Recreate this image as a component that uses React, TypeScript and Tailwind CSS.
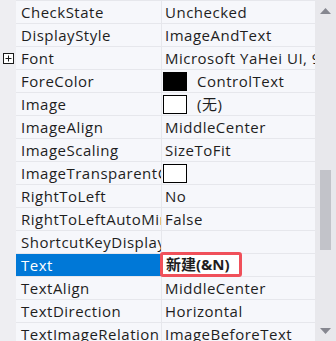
import React from "react";

type Row = {
  name: string;
  value: string;
  swatch?: "black" | "white";
  expand?: boolean;
  selected?: boolean;
};

const rows: Row[] = [
  { name: "CheckState", value: "Unchecked" },
  { name: "DisplayStyle", value: "ImageAndText" },
  { name: "Font", value: "Microsoft YaHei UI, 9pt", expand: true },
  { name: "ForeColor", value: "ControlText", swatch: "black" },
  { name: "Image", value: "(无)", swatch: "white" },
  { name: "ImageAlign", value: "MiddleCenter" },
  { name: "ImageScaling", value: "SizeToFit" },
  { name: "ImageTransparentColor", value: "", swatch: "white" },
  { name: "RightToLeft", value: "No" },
  { name: "RightToLeftAutoMirrorImage", value: "False" },
  { name: "ShortcutKeyDisplayString", value: "" },
  { name: "Text", value: "新建(&N)", selected: true },
  { name: "TextAlign", value: "MiddleCenter" },
  { name: "TextDirection", value: "Horizontal" },
  { name: "TextImageRelation", value: "ImageBeforeText" },
];

function ExpandIcon() {
  return (
    <svg width="11" height="11" viewBox="0 0 11 11" className="block">
      <rect x="0.5" y="0.5" width="10" height="10" fill="white" stroke="#1a1a1a" strokeWidth="1" />
      <line x1="2.5" y1="5.5" x2="8.5" y2="5.5" stroke="#1a1a1a" strokeWidth="1" />
      <line x1="5.5" y1="2.5" x2="5.5" y2="8.5" stroke="#1a1a1a" strokeWidth="1" />
    </svg>
  );
}

export default function App() {
  return (
    <div
      className="relative flex w-[336px] h-[341px] overflow-hidden bg-[#f6f7fb] text-[15px] tracking-[0.5px] text-[#1e1e1e]"
      style={{ fontFamily: '"Open Sans", "Noto Sans CJK SC", sans-serif' }}
    >
      <div className="flex flex-col w-[315px] shrink-0">
        {rows.map((r) => (
          <div key={r.name} className="flex h-[23px] shrink-0">
            <div className="w-[16px] shrink-0 bg-[#eeeef2] flex items-center justify-center pl-[1px] pt-[1px]">
              {r.expand && <ExpandIcon />}
            </div>
            <div
              className={
                r.selected
                  ? "w-[145px] shrink-0 border-t border-[#e6e7ec] bg-[#0078d7] text-white pl-[5px] leading-[22px] whitespace-nowrap overflow-hidden"
                  : "w-[145px] shrink-0 border-t border-[#e6e7ec] pl-[5px] leading-[22px] whitespace-nowrap overflow-hidden"
              }
            >
              {r.name}
            </div>
            <div className="flex-1 min-w-0 border-t border-l border-[#e6e7ec] flex items-center whitespace-nowrap overflow-hidden leading-[22px]">
              {r.swatch ? (
                <>
                  <div
                    className={
                      r.swatch === "black"
                        ? "ml-[1px] w-[24px] h-[19px] shrink-0 bg-black border border-black"
                        : "ml-[1px] w-[24px] h-[19px] shrink-0 bg-white border border-black"
                    }
                  />
                  <span className="ml-[10px]">{r.value}</span>
                </>
              ) : r.selected ? null : (
                <span className="pl-[3px]">{r.value}</span>
              )}
            </div>
          </div>
        ))}
      </div>

      {/* scrollbar */}
      <div className="relative w-[21px] shrink-0 bg-[#e8e8ec]">
        <svg className="absolute left-[5px] top-[8px]" width="11" height="6" viewBox="0 0 11 6">
          <polygon points="5.5,0 11,6 0,6" fill="#868790" />
        </svg>
        <div className="absolute left-[5px] top-[170px] w-[11px] h-[80px] bg-[#c2c3c9]" />
        <svg className="absolute left-[5px] top-[328px]" width="11" height="6" viewBox="0 0 11 6">
          <polygon points="0,0 11,0 5.5,6" fill="#868790" />
        </svg>
      </div>

      {/* red annotation box around the edited value */}
      <div className="absolute left-[160px] top-[252px] w-[82px] h-[25px] rounded-[3px] border-[3px] border-[#f0505a] bg-white flex items-center">
        <span className="pl-[3px] font-bold leading-none whitespace-nowrap tracking-normal">新建(&amp;N)</span>
      </div>
    </div>
  );
}
